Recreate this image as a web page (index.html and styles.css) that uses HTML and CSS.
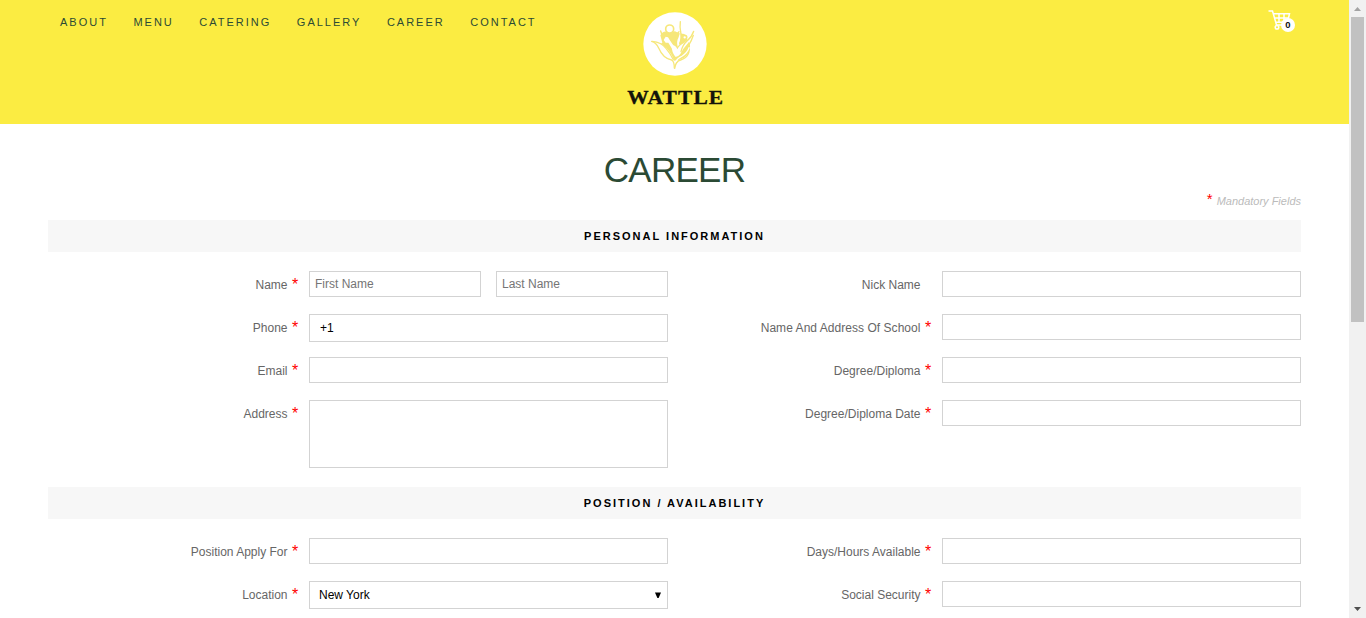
FILE: index.html
```html
<!DOCTYPE html>
<html lang="en">
<head>
<meta charset="utf-8">
<title>Wattle - Career</title>
<link rel="stylesheet" href="styles.css">
</head>
<body>
<div class="page">
  <header class="header">
    <nav class="nav"><a>ABOUT</a><a>MENU</a><a>CATERING</a><a>GALLERY</a><a>CAREER</a><a>CONTACT</a></nav>
    <div class="logo">
      <svg class="emblem" width="64" height="64" viewBox="0 0 192 192">
        <circle cx="96" cy="96" r="95" fill="#fff"/>
        <path d="M52 70Q60 54 76 60L96 58L108 64L124 66L134 84L141 96Q142 124 122 138Q108 146 96 146Q72 145 58 128Q47 114 50 98L58 92Z" fill="#f6e77a"/>
        <g fill="#fff">
          <path d="M62 84L68 74L75 76L80 84L94 104L98 118L88 112L76 92L68 92Z"/>
          <path d="M28 88Q54 90 70 108Q86 124 94 148Q66 142 50 118Q44 98 28 88Z"/>
          <path d="M86 100Q98 98 103 112Q108 100 124 92Q140 80 148 70Q142 88 130 100Q118 112 112 126Q104 136 97 134Q86 122 86 100Z"/>
          <path d="M112 60Q116 78 110 96L104 104Q100 88 106 78Z"/>
        </g>
        <g fill="none" stroke="#f6e77a" stroke-width="4" stroke-linecap="round" stroke-linejoin="round">
          <path d="M26 88Q40 92 47 108Q60 139 86 144Q94 148 94 168"/>
          <path d="M28 88Q55 90 69 109Q82 124 91 143"/>
          <path d="M152 58Q146 76 132 87Q119 98 114 119"/>
          <path d="M151 70Q145 88 138 98Q144 134 113 144Q98 147 95 169"/>
          <path d="M112 29Q110 43 113 60Q117 78 110 94"/>
          <path d="M53 57Q55 67 62 74M96 81Q97 69 108 59"/>
        </g>
        <path d="M139 106Q132 124 118 132Q103 139 97 150" fill="none" stroke="#fff" stroke-width="4"/>
        <g fill="#fff" stroke="#f6e77a" stroke-width="5"><circle cx="80" cy="51" r="12"/><circle cx="125" cy="76" r="6"/></g>
      </svg>
      <svg class="wordmark" width="108" height="20" viewBox="0 0 108 20"><text x="48.5" y="16" transform="scale(1.13 1)" text-anchor="middle">WATTLE</text></svg>
    </div>
    <div class="cart">
      <svg width="24" height="22" viewBox="0 0 24 22" fill="none" stroke="#fff" stroke-width="1.5">
        <path d="M0.5 1H4.5L8.5 15H18M5.5 3.7H21.5L19.5 12.3H7.5M6.5 8H20.5M11 4V12M16 4V12"/><circle cx="9" cy="17.3" r="1.8"/><circle cx="17" cy="17.3" r="1.8"/>
      </svg>
      <span class="badge">0</span>
    </div>
  </header>
  <main class="content">
    <h1 class="title">CAREER</h1>
    <p class="mandatory"><b class="star">*</b>Mandatory Fields</p>
    <h2 class="bar">PERSONAL INFORMATION</h2>
    <div class="columns">
      <div class="column">
        <div class="row"><label class="label">Name</label><i class="star">*</i><div class="pair"><input class="field" placeholder="First Name"><input class="field" placeholder="Last Name"></div></div>
        <div class="row"><label class="label">Phone</label><i class="star">*</i><input class="field tall phone" value="+1"></div>
        <div class="row"><label class="label">Email</label><i class="star">*</i><input class="field"></div>
        <div class="row"><label class="label">Address</label><i class="star">*</i><textarea class="field area"></textarea></div>
      </div>
      <div class="column">
        <div class="row"><label class="label">Nick Name</label><i class="star"></i><input class="field"></div>
        <div class="row"><label class="label long">Name And Address Of School</label><i class="star">*</i><input class="field"></div>
        <div class="row"><label class="label">Degree/Diploma</label><i class="star">*</i><input class="field"></div>
        <div class="row"><label class="label">Degree/Diploma Date</label><i class="star">*</i><input class="field"></div>
      </div>
    </div>
    <h2 class="bar second">POSITION / AVAILABILITY</h2>
    <div class="columns">
      <div class="column">
        <div class="row"><label class="label">Position Apply For</label><i class="star">*</i><input class="field"></div>
        <div class="row"><label class="label">Location</label><i class="star">*</i><div class="field tall select">New York<svg width="6" height="7" viewBox="0 0 6 7"><path d="M0 0.5H6L3.6 6H2.4Z"/></svg></div></div>
      </div>
      <div class="column">
        <div class="row"><label class="label">Days/Hours Available</label><i class="star">*</i><input class="field"></div>
        <div class="row"><label class="label">Social Security</label><i class="star">*</i><input class="field"></div>
      </div>
    </div>
  </main>
</div>
<div class="scrollbar">
  <svg width="7" height="4" viewBox="0 0 7 4"><path d="M0 4L3.5 0L7 4Z" fill="#a3a3a3"/></svg>
  <div class="thumb"></div>
  <svg class="down" width="7" height="4" viewBox="0 0 7 4"><path d="M0 0H7L3.5 4Z" fill="#505050"/></svg>
</div>
</body>
</html>
```
FILE: styles.css
```css
* { box-sizing: border-box; }
body {
  margin: 0;
  height: 618px;
  display: flex;
  overflow: hidden;
  background: #fff;
  font: 12px/16px "Liberation Sans", Arial, sans-serif;
}
.page { width: 1349px; height: 618px; overflow: hidden; }
.header {
  height: 124px;
  background: #fbec42;
  display: grid;
  grid-template-columns: 561px 108px 1fr;
  padding: 0 53px 0 60px;
}
.nav {
  display: flex;
  gap: 25.5px;
  padding-top: 14px;
  font-size: 11px;
  letter-spacing: 2px;
  color: #2b4a34;
}
.logo { display: flex; flex-direction: column; align-items: center; padding-top: 12px; }
.wordmark { margin-top: 12px; }
.wordmark text { font: bold 19px "Liberation Serif", serif; letter-spacing: 1px; fill: #14140a; stroke: #14140a; stroke-width: .3px; }
.cart { position: relative; justify-self: end; width: 28px; height: 24px; margin-top: 10px; }
.badge {
  position: absolute;
  left: 13px;
  top: 8px;
  width: 14px;
  height: 14px;
  border-radius: 50%;
  background: #fff;
  font: bold 9.5px/14px "Liberation Sans", sans-serif;
  text-align: center;
  color: #111;
}
.content { padding: 0 48px; }
.title {
  margin: 0;
  padding-top: 25px;
  font-size: 35px;
  line-height: 42px;
  letter-spacing: -.7px;
  font-weight: normal;
  text-align: center;
  color: #2b4a34;
}
.mandatory {
  display: flex;
  justify-content: flex-end;
  margin: 2px 0 11px;
  font-size: 11px;
  font-style: italic;
  color: #bbb;
}
.star { width: 9px; flex: none; font: normal 16px/18px "Liberation Sans", sans-serif; color: #f00; }
.mandatory .star { width: 10px; line-height: 11px; font-size: 15px; }
.bar {
  margin: 0;
  height: 32px;
  background: #f7f7f7;
  font-size: 11px;
  line-height: 32px;
  letter-spacing: 2px;
  text-align: center;
  color: #000;
}
.second { margin-top: 19px; }
.columns { display: grid; grid-template-columns: 620px 620px; gap: 13px; padding-top: 19px; }
.column { display: flex; flex-direction: column; gap: 15px; }
.row { display: flex; align-items: flex-start; height: 28px; }
.row:has(.area) { height: 68px; }
.label { width: 240px; text-align: right; padding: 6px .5px 0 0; color: #666; }
.long { letter-spacing: .04px; }
.row .star { width: 21px; padding: 5px 0 0 4px; }
.field {
  width: 359px;
  height: 26px;
  margin: 0;
  padding: 0 5px;
  border: 1px solid #d3d3d3;
  border-radius: 0;
  background: #fff;
  color: #000;
  font: 12px "Liberation Sans", Arial, sans-serif;
}
.field::placeholder { color: #757575; }
.pair { display: flex; gap: 15px; width: 359px; }
.pair .field { width: 172px; }
.tall { height: 28px; padding: 0 6px 0 9px; }
.phone { padding-left: 10px; }
.area { height: 68px; resize: none; }
.select { display: flex; align-items: center; justify-content: space-between; }
.scrollbar { width: 17px; height: 618px; background: #f1f1f1; display: flex; flex-direction: column; align-items: center; padding-top: 7px; }
.thumb { width: 13px; height: 305px; margin-top: 6px; background: #c1c1c1; }
.down { margin-top: auto; margin-bottom: 7px; }
```
